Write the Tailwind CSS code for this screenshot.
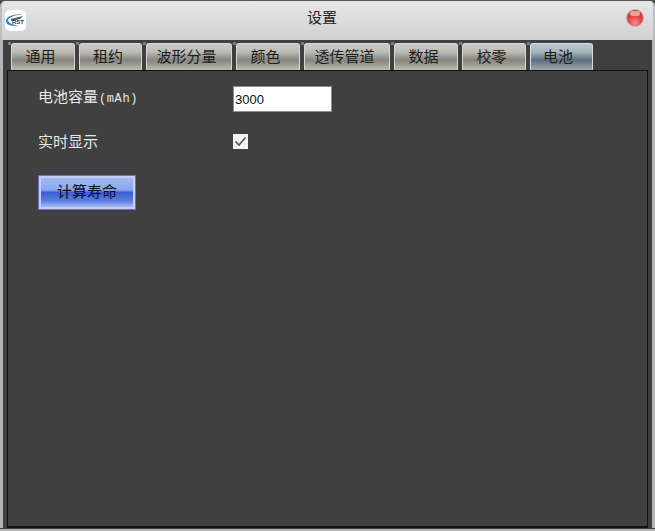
<!DOCTYPE html>
<html>
<head>
<meta charset="utf-8">
<script src="https://cdn.jsdelivr.net/npm/@tailwindcss/browser@4"></script>
</head>
<body class="bg-[#404040]">
<div class="w-[655px] h-[531px] flex flex-col overflow-hidden bg-[#404040] border-t border-t-[#555] font-['Liberation_Sans','Noto_Sans_CJK_SC',sans-serif]">
  <!-- title bar -->
  <div class="relative h-[39px] shrink-0 flex items-center justify-center rounded-t-[5px] border-l-2 border-r-2 border-[#bdbdbd] bg-gradient-to-b from-[#e6e6e6] to-[#d2d2d2]">
    <span class="text-[15px] leading-none text-[#222] pb-[6px] pr-[11px]">设置</span>
    <div class="absolute left-[3px] top-[9px] w-[21px] h-[21px] rounded-[5px] bg-white overflow-hidden">
      <svg width="20" height="14" viewBox="0 0 20 14" class="absolute left-[0px] top-[3px]">
        <path d="M1 8 C1 3 9 1 18 1 C11 2 4 4 3 7 C3 10 8 12 14 12 C7 14 1 12 1 8 Z" fill="#2a86d0"/>
        <path d="M6 6 L18 3 L15 6 L6 8 Z" fill="#3f5a78"/>
      </svg>
      <span class="absolute left-[7px] top-[9px] text-[6px] leading-none font-bold text-[#27384f]">RST</span>
    </div>
    <div class="absolute right-[9px] top-[8px] w-[18px] h-[18px] rounded-full border border-[#c9b4b4] bg-[radial-gradient(circle_at_50%_80%,#f58a8a_0%,#e04040_50%,#c02828_100%)] flex justify-center">
      <div class="w-[10px] h-[5px] mt-[1px] rounded-full bg-[#eda0a0]"></div>
    </div>
  </div>

  <!-- dialog body -->
  <div class="flex-1 min-h-0 flex flex-col border-l-[5px] border-r-[5px] border-b-[3px] border-[#404040] relative">
    <div class="absolute inset-y-0 left-[-5px] w-[3px] bg-[#b4b4b4]"></div>
    <div class="absolute inset-y-0 right-[-5px] w-[3px] bg-[#b4b4b4]"></div>
    <div class="absolute bottom-[-3px] left-[-5px] right-[-5px] h-[2px] bg-[#b4b4b4]"></div>

    <!-- tabs -->
    <div class="flex gap-[4px] pl-[6px] pt-[3px] h-[30px] shrink-0 text-[15px] leading-none text-[#1c1c1c]">
      <div class="relative before:content-[''] before:absolute before:left-[-4px] before:top-[-2px] before:w-[3px] before:h-[3px] before:bg-[#7a7a7a] w-[64px] pr-[5px] pb-[2px] flex items-center justify-center rounded-t-[3px] border border-[#d9d7d0] border-b-0 bg-[linear-gradient(#cdcbc5_0%,#bdbbb5_30%,#85857f_62%,#bcbab0_100%)]">通用</div>
      <div class="relative before:content-[''] before:absolute before:left-[-4px] before:top-[-2px] before:w-[3px] before:h-[3px] before:bg-[#7a7a7a] w-[63px] pr-[5px] pb-[2px] flex items-center justify-center rounded-t-[3px] border border-[#d9d7d0] border-b-0 bg-[linear-gradient(#cdcbc5_0%,#bdbbb5_30%,#85857f_62%,#bcbab0_100%)]">租约</div>
      <div class="relative before:content-[''] before:absolute before:left-[-4px] before:top-[-2px] before:w-[3px] before:h-[3px] before:bg-[#7a7a7a] w-[86px] pr-[5px] pb-[2px] flex items-center justify-center rounded-t-[3px] border border-[#d9d7d0] border-b-0 bg-[linear-gradient(#cdcbc5_0%,#bdbbb5_30%,#85857f_62%,#bcbab0_100%)]">波形分量</div>
      <div class="relative before:content-[''] before:absolute before:left-[-4px] before:top-[-2px] before:w-[3px] before:h-[3px] before:bg-[#7a7a7a] w-[64px] pr-[5px] pb-[2px] flex items-center justify-center rounded-t-[3px] border border-[#d9d7d0] border-b-0 bg-[linear-gradient(#cdcbc5_0%,#bdbbb5_30%,#85857f_62%,#bcbab0_100%)]">颜色</div>
      <div class="relative before:content-[''] before:absolute before:left-[-4px] before:top-[-2px] before:w-[3px] before:h-[3px] before:bg-[#7a7a7a] w-[86px] pr-[5px] pb-[2px] flex items-center justify-center rounded-t-[3px] border border-[#d9d7d0] border-b-0 bg-[linear-gradient(#cdcbc5_0%,#bdbbb5_30%,#85857f_62%,#bcbab0_100%)]">透传管道</div>
      <div class="relative before:content-[''] before:absolute before:left-[-4px] before:top-[-2px] before:w-[3px] before:h-[3px] before:bg-[#7a7a7a] w-[64px] pr-[5px] pb-[2px] flex items-center justify-center rounded-t-[3px] border border-[#d9d7d0] border-b-0 bg-[linear-gradient(#cdcbc5_0%,#bdbbb5_30%,#85857f_62%,#bcbab0_100%)]">数据</div>
      <div class="relative before:content-[''] before:absolute before:left-[-4px] before:top-[-2px] before:w-[3px] before:h-[3px] before:bg-[#7a7a7a] w-[64px] pr-[5px] pb-[2px] flex items-center justify-center rounded-t-[3px] border border-[#d9d7d0] border-b-0 bg-[linear-gradient(#cdcbc5_0%,#bdbbb5_30%,#85857f_62%,#bcbab0_100%)]">校零</div>
      <div class="relative before:content-[''] before:absolute before:left-[-4px] before:top-[-2px] before:w-[3px] before:h-[3px] before:bg-[#7a7a7a] w-[63px] pr-[7px] pb-[2px] flex items-center justify-center rounded-t-[3px] border border-[#d5dde2] border-b-0 bg-[linear-gradient(#bcc6cc_0%,#a9b6be_30%,#5d7080_62%,#98a8b2_100%)]">电池</div>
    </div>

    <!-- panel -->
    <div class="flex-1 min-h-0 ml-[2px] mr-[2px] border border-[#111] border-b-2 bg-[#404040] pl-[30px] pt-[15px] text-[15px] leading-none text-[#e8e8e8]">
      <div class="flex items-center h-[26px]">
        <span class="w-[195px] pb-[5px]">电池容量<span class="font-['Liberation_Mono'] text-[12px] tracking-[0.6px] ml-[1px]">(mAh)</span></span>
        <div class="w-[99px] h-[26px] bg-white border border-[#8c8c8c] text-[#111] text-[13px] flex items-center pl-[1px]">3000</div>
      </div>
      <div class="flex items-center h-[16px] mt-[21px]">
        <span class="w-[195px]">实时显示</span>
        <div class="w-[15px] h-[15px] bg-[#f4f4f4] flex items-center justify-center">
          <svg width="13" height="11" viewBox="0 0 13 11"><path d="M1.5 5.5 L5 9 L11.5 1.5" fill="none" stroke="#555" stroke-width="1.6"/></svg>
        </div>
      </div>
      <div class="w-[98px] h-[35px] mt-[26px] flex items-center justify-center border border-[#6f6cc8] outline outline-2 -outline-offset-3 outline-[#c5cff5] bg-[linear-gradient(#a6bcf2_0%,#8ba6ee_42%,#3b5fd6_50%,#5a7de0_75%,#b9ccf8_100%)] text-[#0c0c20] pb-[3px]">计算寿命</div>
    </div>
  </div>
</div>
</body>
</html>
